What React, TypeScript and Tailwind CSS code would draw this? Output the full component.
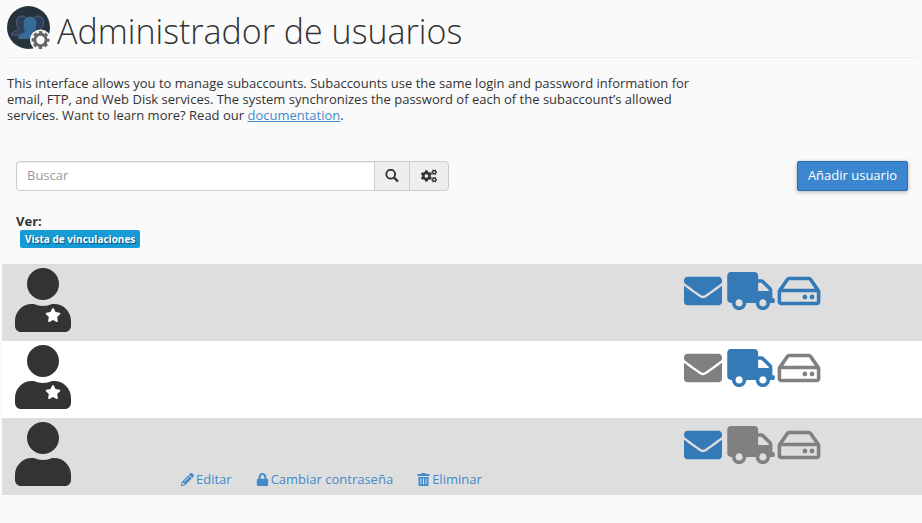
import { FaCogs, FaEnvelope, FaLock, FaPencilAlt, FaRegHdd, FaStar, FaTruck, FaUser } from "react-icons/fa";
import clsx from "clsx";

interface Account {
  id: number;
  starred: boolean;
  email: boolean;
  ftp: boolean;
  webDisk: boolean;
  editable: boolean;
}

const accounts: Account[] = [
  { id: 1, starred: true, email: true, ftp: true, webDisk: true, editable: false },
  { id: 2, starred: true, email: false, ftp: true, webDisk: false, editable: false },
  { id: 3, starred: false, email: true, ftp: false, webDisk: false, editable: true },
];

function UserManagerLogo() {
  return (
    <svg viewBox="0 0 44 44" className="h-11 w-11 shrink-0" aria-hidden="true">
      <circle cx="21.5" cy="21.5" r="21.5" fill="#25333d" />
      <g fill="#2d3f61" stroke="#66717c" strokeWidth="0.7">
        <path d="M15 10c3.500 0 5 2.500 5 6s-1 5-2 6.500v3l2 2-3 1.500H4.500c0-3 3-3.500 5.500-4.500 1.500-.6 1.600-1.500 1-3-1-1.500-1.500-3.500-1.500-5.500 0-3.500 2-6 5.500-6z" />
        <path d="M31 10c-3.500 0-5 2.500-5 6s1 5 2 6.500v3l-2 2 3 1.500h10c0-3-1.500-3.500-3.500-4.500-1-.6-1.100-1.500-.5-3 1-1.500 1.500-3.500 1.500-5.500 0-3.500-2-6-5.500-6z" />
      </g>
      <path
        d="M23 11c4 0 6 2.800 6 6.500 0 3-1 5-2.300 6.500-.7 1.500-.5 2.500 1.300 3.200 3 1 5 1.800 5 5.300H11.500c0-3.500 2-4.300 5.200-5.300 2-.7 2.300-1.700 1.600-3.200C17.500 22.500 17 20.500 17 17.500c0-3.700 2-6.500 6-6.500z"
        fill="#336b9b"
        stroke="#5b7285"
        strokeWidth="0.6"
      />
      <circle cx="33.500" cy="34" r="10.500" fill="#fafafa" />
      <circle cx="33.500" cy="34" r="5.700" fill="none" stroke="#666" strokeWidth="3" />
      <circle cx="33.500" cy="34" r="7.600" fill="none" stroke="#666" strokeWidth="2.600" strokeDasharray="3.400 2.569" strokeDashoffset="1.700" />
    </svg>
  );
}

function SearchIcon() {
  return (
    <svg viewBox="0 0 14 14" className="h-3.5 w-3.5" fill="none" stroke="currentColor" aria-hidden="true">
      <circle cx="5.700" cy="5.200" r="4.400" strokeWidth="1.900" />
      <path d="M9 8.500l4 4" strokeWidth="2.400" />
    </svg>
  );
}

function TrashIcon() {
  return (
    <svg viewBox="0 0 13 13" className="h-[13px] w-[13px]" fill="currentColor" aria-hidden="true">
      <path d="M4.500 0h4v1H12q.500 0 .500.500V3H.500V1.500Q.500 1 1 1h3.500z" />
      <path fillRule="evenodd" d="M1.500 4h10v8q0 1-1 1h-8q-1 0-1-1zM3.500 5.500v6h1v-6zM6 5.500v6h1v-6zM8.500 5.500v6h1v-6z" />
    </svg>
  );
}

function AccountRow({ account }: { account: Account }) {
  const tone = (on: boolean) => (on ? "text-[#337ab7]" : "text-[#808080]");

  return (
    <li className="flex h-[77px] bg-white pl-3 odd:bg-[#dedede]">
      <div className="relative w-[167px] shrink-0 pt-1">
        <FaUser className="h-16 w-[58px] text-[#333]" />
        {account.starred && <FaStar className="absolute left-[31px] top-11 h-3.5 w-4 text-white" />}
      </div>

      <div className="flex min-w-0 flex-1 items-end gap-6 pb-2 text-[13px] leading-4 text-[#428bca]">
        {account.editable && (
          <>
            <a href="#editar" className="flex items-center gap-0.5">
              <FaPencilAlt className="h-[13px] w-[13px]" /> Editar
            </a>
            <a href="#contrasena" className="flex items-center gap-0.5">
              <FaLock className="h-[13px] w-[13px]" /> Cambiar contraseña
            </a>
            <a href="#eliminar" className="flex items-center gap-0.5">
              <TrashIcon /> Eliminar
            </a>
          </>
        )}
      </div>

      {/* Services */}
      <div className="flex w-[243px] shrink-0 pt-2 text-[38px]">
        <span className={clsx("flex w-12 justify-center", tone(account.email))}>
          <FaEnvelope />
        </span>
        <span className={clsx("flex w-12 justify-center", tone(account.ftp))}>
          <FaTruck className="h-[38px] w-12" />
        </span>
        <span className={clsx("flex w-12 justify-center", tone(account.webDisk))}>
          <FaRegHdd className="h-[38px] w-11" />
        </span>
      </div>
    </li>
  );
}

export default function App() {
  return (
    <div className="min-h-screen bg-[#fafafa] font-['Open_Sans',sans-serif] text-[13px] text-[#333]">
      <header className="ml-1.5 mr-1 flex h-[58px] items-start gap-1.5 border-b border-[#eee] pl-px pt-1.5">
        <UserManagerLogo />
        <h1 className="text-[34px] font-light leading-[50px]">Administrador de usuarios</h1>
      </header>

      <p className="ml-[7px] mt-[17px] max-w-[690px] leading-4">
        This interface allows you to manage subaccounts. Subaccounts use the same login and password information for
        email, FTP, and Web Disk services. The system synchronizes the password of each of the subaccount’s allowed
        services. Want to learn more? Read our{" "}
        <a href="#documentation" className="text-[#428bca] underline">
          documentation
        </a>
        .
      </p>

      <div className="mt-[38px] flex items-center justify-between pl-4 pr-3.5">
        <form className="flex h-[30px] w-[433px]" onSubmit={(e) => e.preventDefault()}>
          <input
            type="text"
            aria-label="Buscar"
            placeholder="Buscar"
            className="min-w-0 flex-1 rounded-l border border-[#ccc] bg-white px-2.5 shadow-[inset_0_1px_1px_rgba(0,0,0,0.075)] placeholder:text-[#999]"
          />
          <button type="submit" aria-label="Buscar" className="flex w-[34px] items-center justify-center border-y border-[#ccc] bg-[#eee]">
            <SearchIcon />
          </button>
          <button type="button" aria-label="Opciones" className="flex w-10 items-center justify-center rounded-r-sm border border-[#ccc] bg-[#eee]">
            <FaCogs className="h-4 w-4" />
          </button>
        </form>
        <button type="button" className="h-[30px] rounded-xs border border-[#2a6fb0] bg-[#3a87cf] px-2.5 text-white shadow-[0_1px_4px_rgba(0,0,0,0.3)]">
          Añadir usuario
        </button>
      </div>

      <div className="mt-[22px] pl-4">
        <div className="font-bold leading-4">Ver:</div>
        <button
          type="button"
          className="ml-1 mt-px block h-[18px] rounded-xs bg-[#179bd7] px-[5px] text-[10px] font-bold leading-[18px] text-white [text-shadow:1px_1px_1px_rgba(0,0,0,0.5)]"
        >
          Vista de vinculaciones
        </button>
      </div>

      <ul className="ml-0.5 mt-4">
        {accounts.map((account) => (
          <AccountRow key={account.id} account={account} />
        ))}
      </ul>
    </div>
  );
}
